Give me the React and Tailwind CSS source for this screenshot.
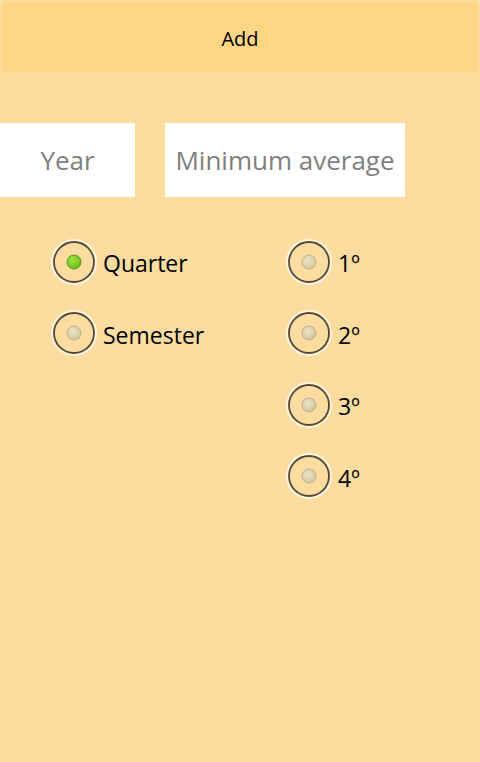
const Radio = ({ checked }) => (
  <svg width="46" height="46" viewBox="0 0 46 46" className="shrink-0">
    <defs>
      <radialGradient id="dotOff" cx="40%" cy="35%" r="70%">
        <stop offset="0%" stopColor="#ece3c2" />
        <stop offset="100%" stopColor="#d3c69f" />
      </radialGradient>
      <radialGradient id="dotOn" cx="40%" cy="35%" r="70%">
        <stop offset="0%" stopColor="#9be63a" />
        <stop offset="100%" stopColor="#66b817" />
      </radialGradient>
    </defs>
    <circle cx="23" cy="23" r="22" fill="none" stroke="#fff4dc" strokeWidth="2" />
    <circle cx="23" cy="23" r="20" fill="none" stroke="#55483a" strokeWidth="1.8" />
    <circle cx="23" cy="23" r="7" fill={checked ? "url(#dotOn)" : "url(#dotOff)"} stroke={checked ? "#5a9a1c" : "#bdb190"} strokeWidth="1" />
  </svg>
);

const Option = ({ label, checked }) => (
  <div className="flex items-center h-[71.5px] gap-[6px]">
    <Radio checked={checked} />
    <span className="text-[23px] text-black leading-none pt-[4px]">{label}</span>
  </div>
);

export default function App() {
  return (
    <div className="w-[480px] h-[762px] bg-[#fddca0] pt-[2px] px-[2px]" style={{ fontFamily: '"Open Sans", "Noto Sans", sans-serif' }}>
      <button className="w-full h-[70px] bg-[#fed684] text-[20px] text-black pt-[3px]">Add</button>

      <div className="flex mt-[51px] -mx-[2px] gap-[30px]">
        <div className="w-[135px] h-[74px] bg-white flex items-center justify-center text-[26px] text-[#808080]">Year</div>
        <div className="w-[240px] h-[74px] bg-white flex items-center justify-center text-[26px] text-[#808080]">Minimum average</div>
      </div>

      <div className="flex mt-[29px]">
        <div className="w-[235px] pl-[49px]">
          <Option label="Quarter" checked />
          <Option label="Semester" />
        </div>
        <div className="pl-[49px]">
          <Option label="1º" />
          <Option label="2º" />
          <Option label="3º" />
          <Option label="4º" />
        </div>
      </div>
    </div>
  );
}
